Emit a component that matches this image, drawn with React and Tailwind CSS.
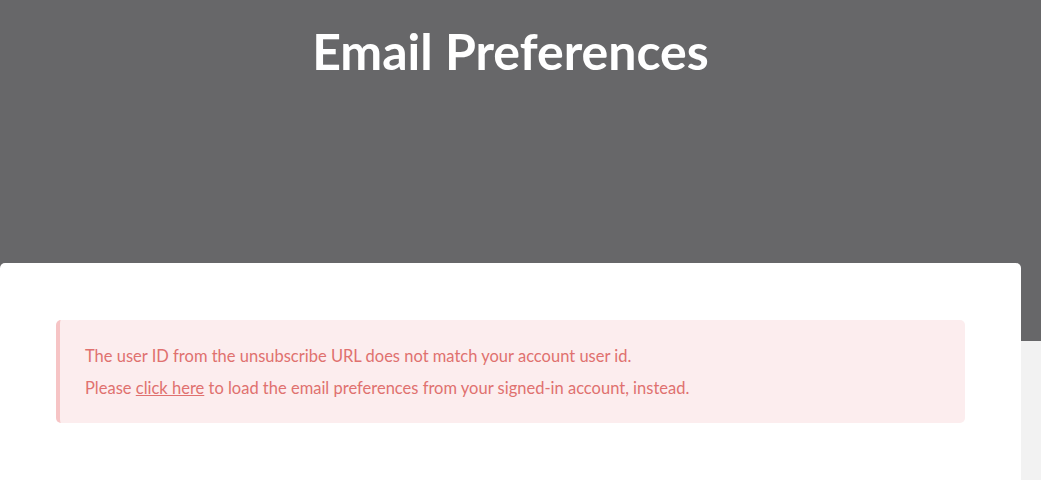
export default function App() {
  return (
    <div className="min-h-[480px] w-full bg-[#f2f2f2] font-['Lato','Noto_Sans',sans-serif]">
      {/* HEADER BAND */}
      <div className="h-[341px] w-full bg-[#676769]">
        <div className="w-[1021px] pt-[22px] text-center">
          <h1 className="text-[50px] font-bold leading-[58px] text-white">Email Preferences</h1>
        </div>
      </div>

      {/* CARD */}
      <div className="relative -mt-[78px] w-[1021px] min-h-[300px] rounded-t-[5px] bg-white px-[56px] pt-[57px]">
        {/* Alert */}
        <div className="rounded-[5px] border-l-4 border-[#f6c4c5] bg-[#fcedee] pt-[20px] pb-[19px] pl-[25px] text-[16.5px] leading-[32px] text-[#e0716f]">
          <p>The user ID from the unsubscribe URL does not match your account user id.</p>
          <p>
            Please <a href="#" className="underline">click here</a> to load the email preferences from your signed-in account, instead.
          </p>
        </div>
      </div>
    </div>
  );
}
